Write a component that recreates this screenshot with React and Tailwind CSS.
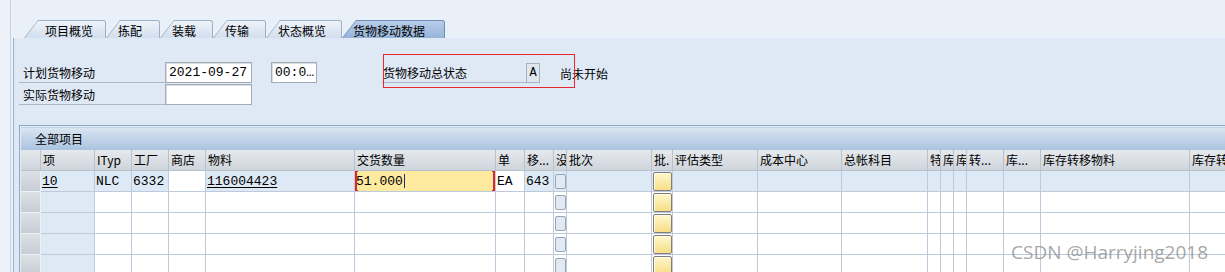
import React from 'react'

const CJK = "font-['Noto_Sans_CJK_SC',sans-serif]"
const MONO = "font-['Liberation_Mono','Noto_Sans_CJK_SC',monospace]"

const TABS = [
  { label: '项目概览', w: 'w-[82px]', pl: 'pl-[20px]' },
  { label: '拣配', w: 'w-[54px]', pl: 'pl-[11px]' },
  { label: '装载', w: 'w-[53px]', pl: 'pl-[11px]' },
  { label: '传输', w: 'w-[53px]', pl: 'pl-[11px]' },
  { label: '状态概览', w: 'w-[76px]', pl: 'pl-[11px]' },
  { label: '货物移动数据', w: 'w-[103px]', pl: 'pl-[10px]', active: true },
]

// column widths include the 1px right grid line
const COLS = [
  { key: 'item', label: '项', w: 'w-[54px]' },
  { key: 'ityp', label: 'ITyp', w: 'w-[37px]' },
  { key: 'plant', label: '工厂', w: 'w-[37px]' },
  { key: 'store', label: '商店', w: 'w-[37px]' },
  { key: 'mat', label: '物料', w: 'w-[149px]' },
  { key: 'qty', label: '交货数量', w: 'w-[141px]' },
  { key: 'unit', label: '单', w: 'w-[29px]' },
  { key: 'mvt', label: '移...', w: 'w-[29px]' },
  { key: 'chk', label: '没', w: 'w-[13px]' },
  { key: 'batch', label: '批次', w: 'w-[85px]' },
  { key: 'btn', label: '批.', w: 'w-[21px]' },
  { key: 'val', label: '评估类型', w: 'w-[85px]' },
  { key: 'cc', label: '成本中心', w: 'w-[84px]' },
  { key: 'gl', label: '总帐科目', w: 'w-[86px]' },
  { key: 'sp', label: '特', w: 'w-[13px]' },
  { key: 's1', label: '库', w: 'w-[13px]' },
  { key: 's2', label: '库', w: 'w-[13px]' },
  { key: 'tr', label: '转...', w: 'w-[37px]' },
  { key: 'st', label: '库...', w: 'w-[37px]' },
  { key: 'tm', label: '库存转移物料', w: 'w-[149px]' },
  { key: 'last', label: '库存转', w: 'w-[120px]' },
]

const FIRST_ROW = {
  item: { text: '10', u: true },
  ityp: { text: 'NLC' },
  plant: { text: '6332' },
  mat: { text: '116004423', u: true },
  qty: { text: '51.000' },
  unit: { text: 'EA' },
  mvt: { text: '643' },
}

function Tab({ label, w, pl, active }) {
  return (
    <div
      className={`relative h-[18px] ${w} shrink-0 rounded-tr-[3px] [clip-path:polygon(14px_0,100%_0,100%_100%,0_100%)] ${
        active ? 'bg-[#6f8fb9]' : 'bg-[#9bb0c9]'
      }`}
    >
      <div
        className={`absolute top-[1px] left-[1px] right-[1px] bottom-0 rounded-tr-[2px] [clip-path:polygon(13px_0,100%_0,100%_100%,0_100%)] flex items-center pt-[2px] ${pl} ${
          active
            ? 'bg-gradient-to-b from-[#b7cde8] to-[#96b4da]'
            : 'bg-gradient-to-b from-[#eef3f9] to-[#d2dfee]'
        }`}
      >
        <span className={`${CJK} text-[12px] leading-none text-black whitespace-nowrap`}>{label}</span>
      </div>
    </div>
  )
}

function Checkbox() {
  return <div className="ml-[1px] w-[12px] h-[15px] rounded-[2px] border border-[#98a4b2] bg-[#e1eaf3]" />
}

function YellowButton() {
  return (
    <div className="ml-[1px] w-[19px] h-[19px] rounded-[2px] border border-[#7f7f7f] bg-gradient-to-b from-[#fff8cc] to-[#f7de85] shadow-[inset_1px_1px_0_#fffbe6]" />
  )
}

function Cell({ col, row }) {
  const first = row === 0
  let bg = 'bg-white'
  if (first) {
    if (col.key === 'qty') bg = 'bg-[#feea9f]'
    else if (col.key === 'store' || col.key === 'unit') bg = 'bg-white'
    else bg = 'bg-[#dde9f4]'
  } else if (col.key === 'item') {
    bg = 'bg-[#dde9f4]'
  }
  const data = first ? FIRST_ROW[col.key] : null

  return (
    <div
      className={`relative ${col.w} h-[21px] shrink-0 border-r border-b border-[#bccadb] ${bg} flex items-center overflow-hidden`}
    >
      {col.key === 'chk' && <Checkbox />}
      {col.key === 'btn' && <YellowButton />}
      {data && (
        <span
          className={`${MONO} pl-[1px] text-[13px] leading-none text-black whitespace-nowrap ${
            data.u ? 'underline underline-offset-2' : ''
          }`}
        >
          {data.text}
        </span>
      )}
      {first && col.key === 'qty' && (
        <>
          <span className="w-[1px] h-[14px] bg-[#1c2f6e] ml-[1px]" />
          <span className="absolute left-0 top-0 bottom-0 w-[3px] border-l-2 border-t border-b border-[#e0262a]" />
          <span className="absolute right-0 top-0 bottom-0 w-[3px] border-r-2 border-t border-b border-[#e0262a]" />
        </>
      )}
    </div>
  )
}

function Input({ w, value }) {
  return (
    <div
      className={`${w} h-[21px] shrink-0 bg-white border border-[#a3abb5] shadow-[inset_1px_1px_0_#d8dde3] flex items-center pl-[3px] overflow-hidden`}
    >
      <span className={`${MONO} text-[13px] leading-none text-black whitespace-nowrap`}>{value}</span>
    </div>
  )
}

function Label({ children, w }) {
  return (
    <div className={`${w} h-[21px] shrink-0 border-b border-[#a9b8ca] flex items-center pl-[4px] pt-[2px]`}>
      <span className={`${CJK} text-[12px] leading-none text-black`}>{children}</span>
    </div>
  )
}

export default function App() {
  return (
    <div className="relative w-[1225px] h-[272px] overflow-hidden bg-[#e9f0f8] flex">
      <div className="w-[11px] shrink-0 bg-[#edf2f8] border-r border-[#c7d4e3]" />
      <div className="flex-1 min-w-0 flex flex-col pl-[2px]">
        {/* tab strip */}
        <div className="pt-[20px] pl-[11px] flex">
          {TABS.map((t) => (
            <Tab key={t.label} {...t} />
          ))}
        </div>
        <div className="h-[2px] bg-[#7d9cc4]" />
        <div className="h-[1px] bg-[#b7cbe2]" />

        {/* panel */}
        <div className="flex-1 bg-[#dfe9f5] border-l border-[#9cb2cc] pt-[24px]">
          <div className="flex items-center">
            <div className="w-[5px] shrink-0" />
            <Label w="w-[146px]">计划货物移动</Label>
            <Input w="w-[87px]" value="2021-09-27" />
            <div className="w-[19px] shrink-0" />
            <Input w="w-[46px]" value="00:0…" />
            <div className="w-[65px] shrink-0" />
            <div className="w-[144px] h-[21px] shrink-0 border-b border-[#a9b8ca] flex items-center pl-[1px] pt-[2px]">
              <span className={`${CJK} text-[12px] leading-none text-black`}>货物移动总状态</span>
            </div>
            <div className="w-[14px] h-[20px] shrink-0 bg-[#dfe6ee] border border-[#a8b2bd] flex items-center justify-center">
              <span className={`${MONO} text-[12px] leading-none text-black`}>A</span>
            </div>
            <div className="w-[20px] shrink-0" />
            <span className={`${CJK} text-[12px] leading-none text-black pt-[2px]`}>尚未开始</span>
          </div>
          <div className="flex items-center mt-[1px]">
            <div className="w-[5px] shrink-0" />
            <Label w="w-[146px]">实际货物移动</Label>
            <Input w="w-[87px]" value="" />
          </div>

          {/* table */}
          <div className="mt-[20px] ml-[5px] border-t border-l border-[#8fa9c8] pt-[1px] pl-[1px] bg-[#e3ecf6]">
            <div className="h-[23px] bg-gradient-to-b from-[#d9e5f2] to-[#a9c3df] border-t border-[#c0d2e6] flex items-center pl-[14px]">
              <span className={`${CJK} text-[12px] leading-none text-black`}>全部项目</span>
            </div>
            <div className="flex h-[21px]">
              <div className="w-[20px] h-[21px] shrink-0 border-r border-b border-[#b7c2cf] bg-gradient-to-b from-[#e4e8ec] to-[#cfd5dc]" />
              {COLS.map((c) => (
                <div
                  key={c.key}
                  className={`${c.w} h-[21px] shrink-0 border-r border-b border-[#b7c2cf] bg-gradient-to-b from-[#e6e9ed] to-[#cfd5dc] flex items-center pl-[2px] overflow-hidden`}
                >
                  <span className={`${CJK} text-[12px] leading-none text-black whitespace-nowrap`}>{c.label}</span>
                </div>
              ))}
            </div>
            {[0, 1, 2, 3, 4].map((r) => (
              <div key={r} className="flex">
                <div className="w-[20px] h-[21px] shrink-0 border-r border-b border-[#eef1f4] bg-gradient-to-b from-[#dde1e6] to-[#c7cdd4]" />
                {COLS.map((c) => (
                  <Cell key={c.key} col={c} row={r} />
                ))}
              </div>
            ))}
          </div>
        </div>
      </div>

      {/* annotation box drawn over the status field */}
      <div className="absolute left-[383px] top-[54px] w-[192px] h-[34px] border border-[#e8282b]" />

      {/* watermark */}
      <div className="absolute left-[1011px] top-[243px] font-['Open_Sans','Noto_Sans',sans-serif] text-[19px] leading-none text-[#8f8f8f]/80 whitespace-nowrap">
        CSDN @Harryjing2018
      </div>
    </div>
  )
}
